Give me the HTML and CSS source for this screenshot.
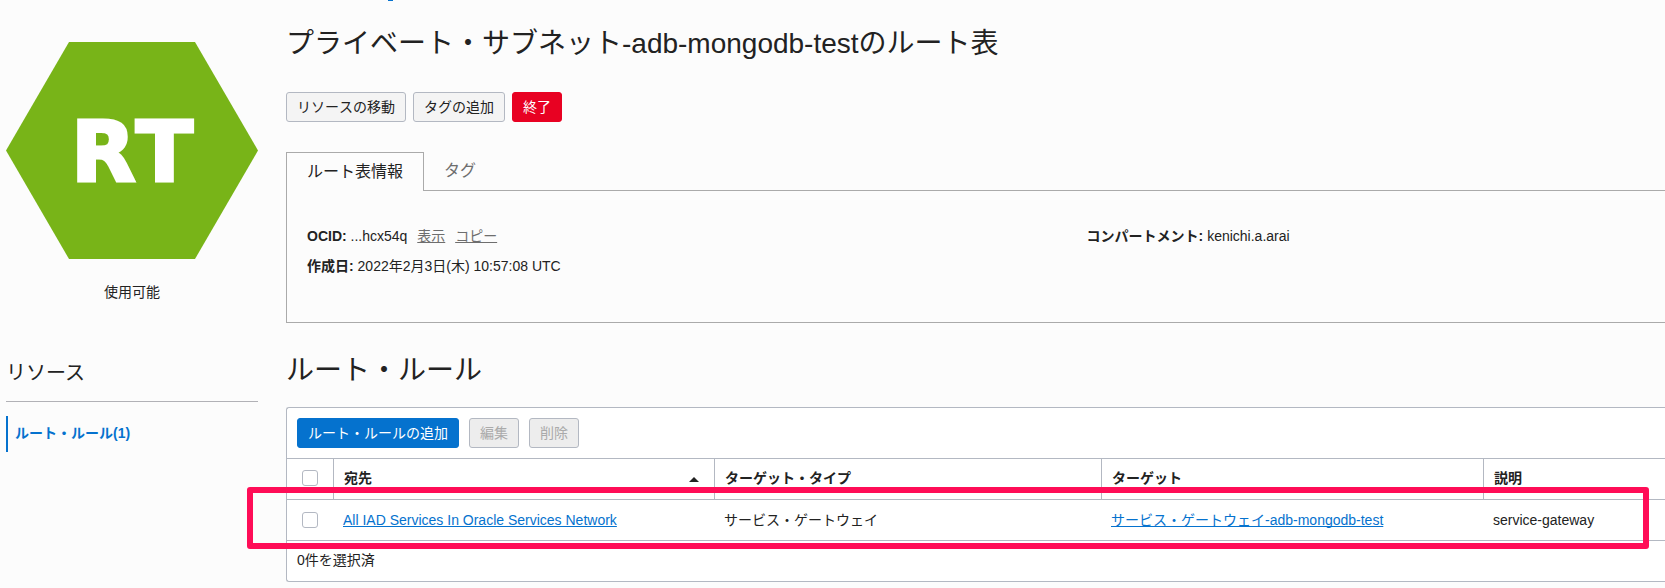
FILE: index.html
```html
<!DOCTYPE html>
<html lang="ja">
<head>
    <meta charset="UTF-8">
    <meta name="viewport" content="width=device-width, initial-scale=1.0">
    <title>ルート表</title>
    <link rel="stylesheet" href="styles.css">
</head>
<body>
    <div class="page">
        <aside class="sidebar">
            <svg class="badge" viewBox="0 0 252 217" role="img" aria-label="RT">
                <polygon points="63,0 189,0 252,108.5 189,217 63,217 0,108.5" fill="#78b418"/>
                <text class="badge-text" x="126" y="139" text-anchor="middle">RT</text>
            </svg>
            <p class="status">使用可能</p>
            <h3 class="resources-title">リソース</h3>
            <nav>
                <a class="resource-link" href="#rules">ルート・ルール(1)</a>
            </nav>
        </aside>

        <main class="content">
            <div class="crumb"></div>
            <h1>プライベート・サブネット-adb-mongodb-testのルート表</h1>

            <div class="actions">
                <button type="button" class="btn">リソースの移動</button>
                <button type="button" class="btn">タグの追加</button>
                <button type="button" class="btn btn-danger">終了</button>
            </div>

            <div class="tabs" role="tablist">
                <button type="button" class="tab active" role="tab" aria-selected="true">ルート表情報</button>
                <button type="button" class="tab" role="tab" aria-selected="false">タグ</button>
            </div>
            <section class="panel">
                <div>
                    <p><strong>OCID:</strong> ...hcx54q <a class="small-link" href="#show">表示</a> <a class="small-link" href="#copy">コピー</a></p>
                    <p><strong>作成日:</strong> 2022年2月3日(木) 10:57:08 UTC</p>
                </div>
                <div>
                    <p><strong>コンパートメント:</strong> kenichi.a.arai</p>
                </div>
            </section>

            <h2 id="rules">ルート・ルール</h2>
            <section class="card">
                <div class="toolbar">
                    <button type="button" class="btn btn-primary">ルート・ルールの追加</button>
                    <button type="button" class="btn" disabled>編集</button>
                    <button type="button" class="btn" disabled>削除</button>
                </div>
                <table class="rules">
                    <colgroup>
                        <col class="col-check">
                        <col class="col-dest">
                        <col class="col-type">
                        <col class="col-target">
                        <col>
                    </colgroup>
                    <thead>
                        <tr>
                            <th class="check"><input type="checkbox" aria-label="すべて選択"></th>
                            <th aria-sort="ascending">
                                <div class="sortable">宛先
                                    <svg class="sort-icon" viewBox="0 0 10 5"><path d="M0 5L5 0L10 5Z"/></svg>
                                </div>
                            </th>
                            <th>ターゲット・タイプ</th>
                            <th>ターゲット</th>
                            <th>説明</th>
                        </tr>
                    </thead>
                    <tbody>
                        <tr class="marked">
                            <td class="check"><input type="checkbox" aria-label="行を選択"></td>
                            <td><a href="#services">All IAD Services In Oracle Services Network</a></td>
                            <td>サービス・ゲートウェイ</td>
                            <td><a href="#gateway">サービス・ゲートウェイ-adb-mongodb-test</a></td>
                            <td>service-gateway</td>
                        </tr>
                    </tbody>
                </table>
                <p class="selected">0件を選択済</p>
            </section>
        </main>
    </div>
</body>
</html>
```

FILE: styles.css
```css
* {
    box-sizing: border-box;
}

body {
    margin: 0;
    background-color: #fcfcfc;
    color: #222;
    font-family: "Liberation Sans", "Noto Sans CJK JP", sans-serif;
    font-size: 14px;
    line-height: 20px;
}

h1, h2, h3, p {
    margin: 0;
    font-weight: normal;
}

a {
    color: #0572ce;
    text-decoration-skip-ink: none;
}

.page {
    display: grid;
    grid-template-columns: 252px minmax(0, 1fr);
    column-gap: 28px;
    padding-left: 6px;
}

/* Sidebar */
.sidebar {
    padding-top: 42px;
}

.badge {
    display: block;
    width: 100%;
}

.badge-text {
    fill: #fff;
    stroke: #fff;
    stroke-width: 3px;
    font-family: "DejaVu Sans", sans-serif;
    font-size: 84px;
    font-weight: bold;
    font-kerning: none;
}

.status {
    margin-top: 23px;
    text-align: center;
}

.resources-title {
    margin-top: 57px;
    padding-bottom: 14px;
    border-bottom: 1px solid #b1b1b6;
    font-size: 20px;
    line-height: 28px;
}

.resource-link {
    display: block;
    margin-top: 14px;
    padding: 7px 7px 9px;
    border-left: 2px solid #0572ce;
    font-weight: bold;
    text-decoration: none;
}

/* Header */
.crumb {
    width: 5px;
    height: 1px;
    margin-left: 102px;
    background: #0572ce;
}

h1, h2 {
    font-size: 28px;
    line-height: 40px;
}

h1 {
    margin-top: 23px;
}

.actions {
    display: flex;
    gap: 7px;
    margin-top: 28px;
}

.btn {
    height: 30px;
    padding: 0 10px;
    border: 1px solid #b3b8c2;
    border-radius: 3px;
    background: #f4f4f4;
    color: #222;
    font: inherit;
    font-kerning: none;
    line-height: 20px;
}

.btn-danger {
    border-color: #e80122;
    background: #e80122;
    color: #fff;
}

.btn-primary {
    border-color: #0572ce;
    background: #0572ce;
    color: #fff;
}

.btn:disabled {
    background: #ededed;
    color: #aaa;
}

/* Tabs */
.tabs {
    display: flex;
    margin-top: 30px;
    border-bottom: 1px solid #aaa;
}

.tab {
    height: 38px;
    padding: 0 20px;
    border: 0;
    background: none;
    color: #6e6e6e;
    font: inherit;
    font-size: 16px;
}

.tab.active {
    height: 39px;
    margin-bottom: -1px;
    border: 1px solid #aaa;
    border-bottom: 0;
    background: #fcfcfc;
    color: #222;
}

.panel {
    display: grid;
    grid-template-columns: 31fr 23fr;
    min-height: 132px;
    padding: 30px 0 30px 20px;
    border-left: 1px solid #aaa;
    border-bottom: 1px solid #aaa;
}

.panel p {
    line-height: 30px;
}

.small-link {
    margin-left: 6px;
    color: #6e6e6e;
}

h2 {
    margin-top: 28px;
}

/* Route rules */
.card {
    margin-top: 16px;
    border: 1px solid #b3b8c2;
    border-right: 0;
    border-radius: 3px 0 0 3px;
    background: #fff;
}

.toolbar {
    display: flex;
    gap: 10px;
    padding: 10px;
}

.rules {
    width: 100%;
    border-collapse: separate;
    border-spacing: 0;
    table-layout: fixed;
}

.col-check {
    width: 46px;
}

.col-dest {
    width: 381px;
}

.col-type {
    width: 387px;
}

.col-target {
    width: 382px;
}

.rules th, .rules td {
    height: 41px;
    padding: 0 10px;
    border-top: 1px solid #b3b8c2;
    text-align: left;
}

.rules th {
    padding-bottom: 2px;
}

.rules th + th {
    border-left: 1px solid #b3b8c2;
}

.rules .check {
    padding-left: 15px;
}

.rules input {
    display: block;
    width: 16px;
    height: 16px;
    margin: 0;
    border: 1px solid #b3b8c2;
    border-radius: 3px;
    background: #fff;
    appearance: none;
}

.sortable {
    display: flex;
    justify-content: space-between;
    align-items: center;
    padding-right: 5px;
}

.sort-icon {
    width: 10px;
    height: 5px;
    margin-top: 3px;
    fill: #222;
}

.marked {
    position: relative;
}

/* Callout frame around the row */
.marked td:last-child::after {
    content: "";
    position: absolute;
    top: -12px;
    right: 16px;
    bottom: -9px;
    left: -40px;
    border: 6px solid #ff0d57;
    border-radius: 3px;
}

.selected {
    padding: 9px 10px 11px;
    border-top: 1px solid #b3b8c2;
}
```
